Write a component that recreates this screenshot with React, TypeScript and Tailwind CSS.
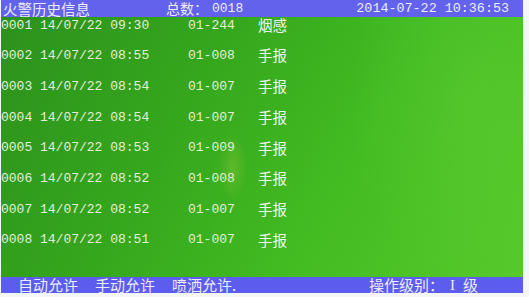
import React from "react";

const rows = [
  ["0001 14/07/22 09:30", "01-244", "烟感"],
  ["0002 14/07/22 08:55", "01-008", "手报"],
  ["0003 14/07/22 08:54", "01-007", "手报"],
  ["0004 14/07/22 08:54", "01-007", "手报"],
  ["0005 14/07/22 08:53", "01-009", "手报"],
  ["0006 14/07/22 08:52", "01-008", "手报"],
  ["0007 14/07/22 08:52", "01-007", "手报"],
  ["0008 14/07/22 08:51", "01-007", "手报"],
];

const mono = "font-['Liberation_Mono','Noto_Sans_CJK_SC',monospace]";
const cjk = "font-['Noto_Sans_CJK_SC',sans-serif]";

export default function App() {
  return (
    <div className="w-[529px] h-[297px] bg-[#f4f6f8] overflow-hidden">
      <div className="ml-[1px] w-[522px] h-[293px] flex flex-col">
        <div className="h-[17px] bg-[#6262ec] flex items-center text-[#ececff] leading-[17px]">
          <span className={`${cjk} text-[14.5px] ml-[2px] w-[163px]`}>火警历史信息</span>
          <span className={`${cjk} text-[14px]`}>总数：</span>
          <span className={`${mono} text-[13px] ml-[4px]`}>0018</span>
          <span className={`${mono} text-[13.4px] ml-auto mr-[14px]`}>2014-07-22 10:36:53</span>
        </div>
        <div className="flex-1 relative bg-[linear-gradient(120deg,#2d911d_0%,#35a71d_35%,#43bc22_65%,#56c92b_100%)]">
          <div className="absolute inset-0 bg-[radial-gradient(ellipse_14px_34px_at_232px_150px,rgba(220,220,80,0.22),transparent)]" />
          <div className="absolute inset-0 bg-[radial-gradient(ellipse_120px_200px_at_470px_80px,rgba(120,220,70,0.2),transparent)]" />
          <div className="relative flex flex-col gap-[14.7px] text-[#e4efd6]">
            {rows.map((r, i) => (
              <div key={i} className="h-[16px] flex items-center leading-none">
                <span className={`${mono} text-[13px] w-[187px] whitespace-pre`}>{r[0]}</span>
                <span className={`${mono} text-[13px] w-[70px]`}>{r[1]}</span>
                <span className={`${cjk} text-[14.5px] text-[#f0f6e8]`}>{r[2]}</span>
              </div>
            ))}
          </div>
        </div>
        <div className="h-[16px] bg-[#5c5cee] flex items-center text-[#ececff] leading-[16px]">
          <span className={`${cjk} text-[15px] ml-[17px]`}>自动允许</span>
          <span className={`${cjk} text-[15px] ml-[17px]`}>手动允许</span>
          <span className={`${cjk} text-[15px] ml-[17px]`}>喷洒允许.</span>
          <span className={`${cjk} text-[15px] ml-auto`}>操作级别：</span>
          <span className="font-['Liberation_Serif',serif] text-[15px] ml-[6px]">I</span>
          <span className={`${cjk} text-[15px] ml-[8px] mr-[45px]`}>级</span>
        </div>
      </div>
    </div>
  );
}
